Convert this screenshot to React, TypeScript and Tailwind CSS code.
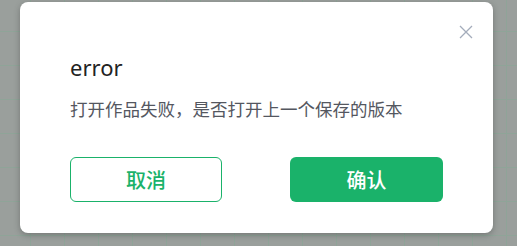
import React from "react";

export default function App() {
  return (
    <div className="w-[517px] h-[246px] overflow-hidden bg-[#9a9f9c] bg-[image:linear-gradient(90deg,#8fa498_1px,transparent_1px),linear-gradient(180deg,#8fa498_1px,transparent_1px)] bg-size-[34px_34px] bg-position-[30px_31px] font-['Noto_Sans','Noto_Sans_CJK_SC',sans-serif]">
      <div className="ml-[20px] mt-[2px] w-[473px] h-[231px] bg-white rounded-[8px] shadow-[0_2px_6px_rgba(0,0,0,0.25)] relative px-[50px] pt-[50px]">
        {/* close */}
        <button className="absolute right-[20px] top-[23px] w-[14px] h-[14px] text-[#a4acbb]">
          <svg viewBox="0 0 14 14" width="14" height="14" fill="none" stroke="currentColor" strokeWidth="1.3">
            <path d="M1 1L13 13M13 1L1 13" />
          </svg>
        </button>

        <h2 className="text-[22px] leading-[30px] text-[#222] font-normal">error</h2>
        <p className="mt-[15px] text-[17.5px] leading-[24px] text-[#54575f] font-['Noto_Sans_CJK_SC',sans-serif]">
          打开作品失败，是否打开上一个保存的版本
        </p>

        <div className="mt-[36px] flex justify-between">
          <button className="w-[152px] h-[45px] rounded-[6px] border border-[#1ab26a] text-[#1ab26a] text-[20px] font-medium font-['Noto_Sans_CJK_SC',sans-serif]">
            取消
          </button>
          <button className="w-[153px] h-[45px] rounded-[6px] bg-[#1ab26a] text-white text-[20px] font-medium font-['Noto_Sans_CJK_SC',sans-serif]">
            确认
          </button>
        </div>
      </div>
    </div>
  );
}
